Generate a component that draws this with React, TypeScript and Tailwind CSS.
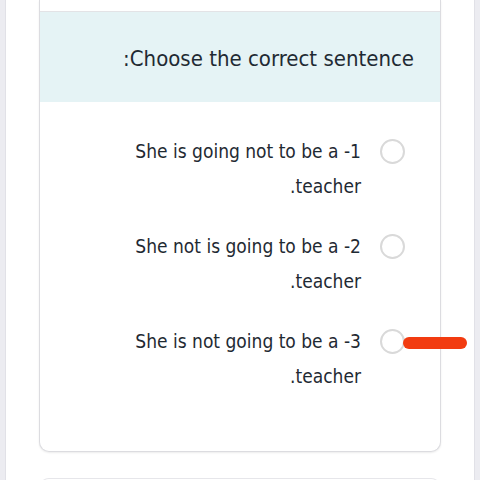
import React from 'react';

const options = [
  { first: 'She is going not to be a -1', second: '.teacher' },
  { first: 'She not is going to be a -2', second: '.teacher' },
  { first: 'She is not going to be a -3', second: '.teacher' },
];

const font = { fontFamily: '"Liberation Sans Narrow", "DejaVu Sans Condensed", Roboto, sans-serif' };

export default function App() {
  return (
    <div className="relative w-[480px] h-[480px] overflow-hidden bg-[#ececf1] px-[5px]" style={font}>
      <div className="h-full bg-white border-x border-[#e1e1e7] px-[33px]">
        <div className="rounded-b-[10px] border-x border-b border-[#dcdce0] bg-white shadow-[0_1px_2px_rgba(0,0,0,0.08)]">
          <div className="h-[12px] border-b border-[#e3e3e6]" />
          <div className="flex h-[90px] items-center justify-end bg-[#e5f3f5] pt-[2px] pr-[26px] text-[22px] text-[#1f2a33]">
            :Choose the correct sentence
          </div>
          <div className="flex flex-col gap-[25px] pt-[32px] pb-[57px] pr-[35px]">
            {options.map((o) => (
              <div key={o.first} className="flex items-start justify-end gap-[19px]">
                <div className="text-right text-[19px] leading-[35px] text-[#1f2a33]">
                  <div>{o.first}</div>
                  <div>{o.second}</div>
                </div>
                <div className="mt-[5px] h-[25px] w-[25px] shrink-0 rounded-full border-2 border-[#d9d9d9]" />
              </div>
            ))}
          </div>
        </div>
        <div className="mt-[26px] h-[20px] rounded-t-[10px] border-x border-t border-[#e6e6ea]" />
      </div>
      <div className="absolute left-[403px] top-[337px] h-[12px] w-[64px] rounded-full bg-[#f23b10]" />
    </div>
  );
}
